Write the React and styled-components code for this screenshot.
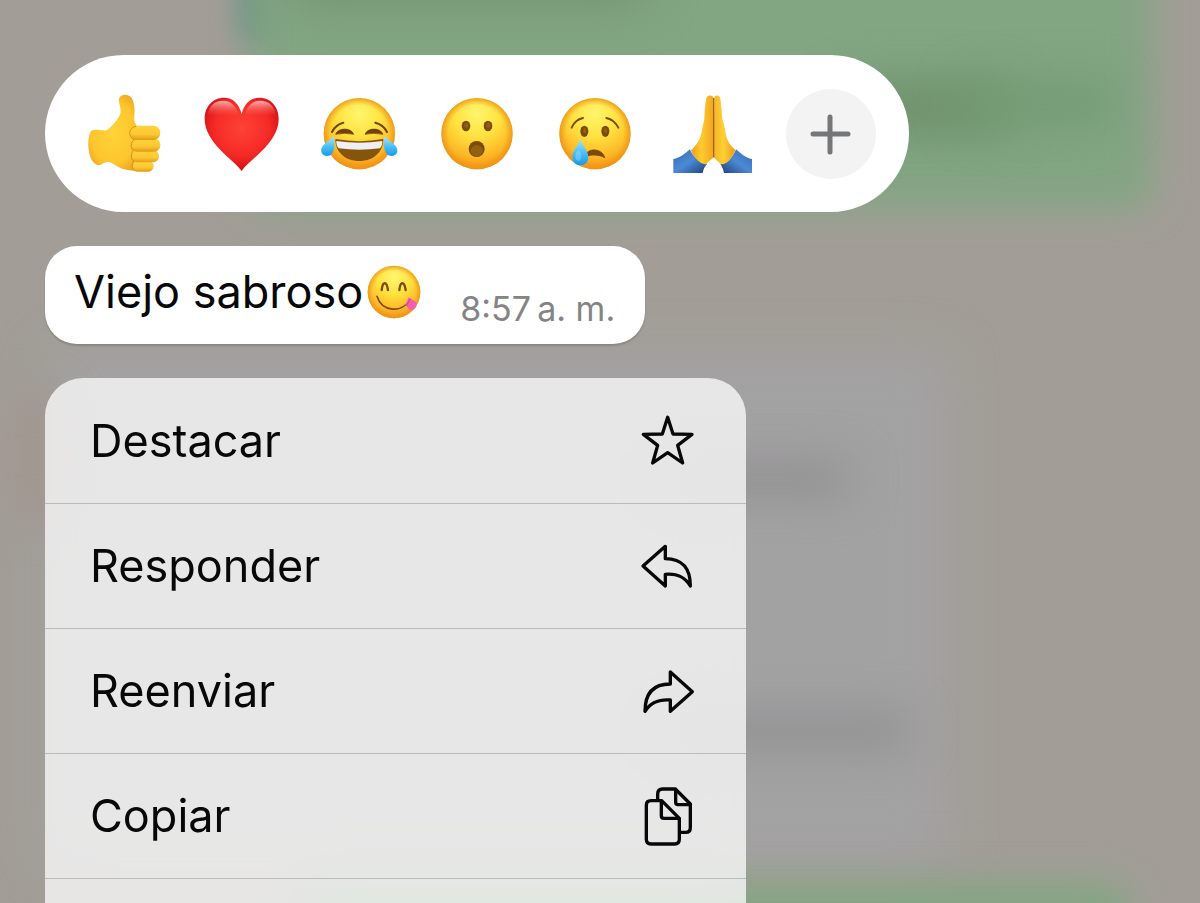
import React from 'react';
import styled, { createGlobalStyle } from "styled-components";

const GlobalStyle = createGlobalStyle`
  * {
    box-sizing: border-box;
  }
  body {
    margin: 0;
    font-family: Inter, "Liberation Sans", sans-serif;
  }
`;

const Page = styled.main`
  position: relative;
  display: flex;
  flex-direction: column;
  align-items: flex-start;
  min-height: 100vh;
  padding: 55px 45px 0;
  overflow: hidden;
  background: #a29e97;
`;

// blurred chat behind the menu
const Backdrop = styled.div`
  position: absolute;
  inset: 0;
  overflow: hidden;
`;

const Blob = styled.div`
  position: absolute;
  left: ${({ $x }) => $x}%;
  top: ${({ $y }) => $y}%;
  width: ${({ $w }) => $w}%;
  height: ${({ $h }) => $h}%;
  border-radius: 20px;
  background: ${({ $color }) => $color};
  filter: blur(${({ $blur }) => $blur || 18}px);
`;

const Reactions = styled.div`
  position: relative;
  display: flex;
  align-items: center;
  gap: 28px;
  max-width: 100%;
  padding: 34px 33px 33px;
  border-radius: 80px;
  background: #ffffff;
`;

const ReactionButton = styled.button`
  display: flex;
  width: 90px;
  height: 90px;
  padding: 0;
  border: none;
  border-radius: 50%;
  background: ${({ $filled }) => ($filled ? "#f3f3f3" : "transparent")};
  cursor: pointer;
  svg {
    width: 100%;
    height: 100%;
  }
`;

const Bubble = styled.div`
  position: relative;
  display: flex;
  align-items: flex-start;
  gap: 39px;
  margin-top: 34px;
  padding: 18px 30px 14px 29px;
  border-radius: 32px;
  background: #ffffff;
  box-shadow: 0 2px 2px rgba(0, 0, 0, 0.16);
`;

const Message = styled.p`
  display: flex;
  align-items: center;
  gap: 4px;
  margin: 0;
  font-size: 45px;
  line-height: 56px;
  color: #080808;
  white-space: nowrap;
  svg {
    width: 54px;
    height: 54px;
  }
`;

const Time = styled.time`
  margin-top: 24px;
  font-size: 34px;
  line-height: 42px;
  color: #848484;
  white-space: nowrap;
`;

const Menu = styled.div`
  position: relative;
  flex: 1;
  width: 100%;
  max-width: 701px;
  margin-top: 34px;
  padding-top: 1px;
  border-radius: 38px 38px 0 0;
  overflow: hidden;
  background: rgba(255, 255, 255, 0.74);
  backdrop-filter: blur(30px);
`;

const MenuItem = styled.button`
  display: flex;
  align-items: center;
  justify-content: space-between;
  width: 100%;
  padding: 32px 48px 32px 45px;
  border: none;
  border-bottom: 1px solid #b9bab9;
  background: transparent;
  font-family: inherit;
  font-size: 45px;
  line-height: 60px;
  color: #080808;
  text-align: left;
  cursor: pointer;
`;

const Icon = styled.svg`
  width: 60px;
  height: 60px;
  fill: none;
  stroke: #080808;
  stroke-width: 10;
  stroke-linecap: round;
  stroke-linejoin: round;
`;

const Gradients = () => (
  <svg width="0" height="0" style={{ position: "absolute" }} aria-hidden="true">
    <defs>
      <radialGradient id="face" cx="50%" cy="22%" r="80%">
        <stop offset="0" stopColor="#fff56e" />
        <stop offset="0.4" stopColor="#ffe23f" />
        <stop offset="0.75" stopColor="#fdb827" />
        <stop offset="1" stopColor="#f48d12" />
      </radialGradient>
      <radialGradient id="rim" cx="50%" cy="50%" r="50%">
        <stop offset="0.8" stopColor="#f09a18" stopOpacity="0" />
        <stop offset="1" stopColor="#ec9418" stopOpacity="0.85" />
      </radialGradient>
      <linearGradient id="tear" x1="0" y1="0" x2="0" y2="1">
        <stop offset="0" stopColor="#a9e6fc" />
        <stop offset="0.5" stopColor="#4fc0f8" />
        <stop offset="1" stopColor="#149bea" />
      </linearGradient>
      <radialGradient id="skin" cx="45%" cy="50%" r="62%">
        <stop offset="0" stopColor="#ffd337" />
        <stop offset="0.65" stopColor="#fdc62e" />
        <stop offset="1" stopColor="#ea9f1c" />
      </radialGradient>
      <linearGradient id="finger" x1="0" y1="0" x2="0" y2="1">
        <stop offset="0" stopColor="#ffd23a" />
        <stop offset="0.6" stopColor="#fdc831" />
        <stop offset="1" stopColor="#e29a1a" />
      </linearGradient>
      <radialGradient id="heart" cx="50%" cy="42%" r="62%">
        <stop offset="0" stopColor="#ff4238" />
        <stop offset="0.6" stopColor="#f52a26" />
        <stop offset="1" stopColor="#c9090f" />
      </radialGradient>
      <linearGradient id="gloss" x1="0" y1="0" x2="0" y2="1">
        <stop offset="0" stopColor="#ffffff" stopOpacity="0.65" />
        <stop offset="0.85" stopColor="#ff7a70" stopOpacity="0" />
      </linearGradient>
      <linearGradient id="sleeve" x1="0" y1="0" x2="1" y2="1">
        <stop offset="0" stopColor="#3567b0" />
        <stop offset="0.5" stopColor="#4c8ad6" />
        <stop offset="1" stopColor="#1f3f78" />
      </linearGradient>
      <linearGradient id="sleeveRight" x1="1" y1="0" x2="0" y2="1">
        <stop offset="0" stopColor="#3567b0" />
        <stop offset="0.5" stopColor="#4c8ad6" />
        <stop offset="1" stopColor="#1f3f78" />
      </linearGradient>
      <linearGradient id="handLeft" x1="0" y1="0" x2="1" y2="0">
        <stop offset="0" stopColor="#eb9f1b" />
        <stop offset="0.45" stopColor="#ffcb30" />
        <stop offset="1" stopColor="#f0a51f" />
      </linearGradient>
      <linearGradient id="handRight" x1="0" y1="0" x2="1" y2="0">
        <stop offset="0" stopColor="#f6b427" />
        <stop offset="0.45" stopColor="#ffcf35" />
        <stop offset="1" stopColor="#eb9f1b" />
      </linearGradient>
    </defs>
  </svg>
);

const Face = ({ cx, cy, r }) => (
  <>
    <circle cx={cx} cy={cy} r={r} fill="url(#face)" />
    <circle cx={cx} cy={cy} r={r} fill="url(#rim)" />
  </>
);

const ThumbsUp = () => (
  <svg viewBox="24 27 270 270">
    <path
      d="M64 152 C76 146 94 153 110 151 C126 139 143 120 151 102 C156 84 142 66 148 54 C154 42 174 41 184 53 C194 66 195 92 193 108 C191 124 196 134 206 141 L222 262 C212 276 182 273 162 268 C142 262 132 250 116 246 C102 244 94 258 82 255 C66 250 56 226 55 198 C54 180 57 160 64 152 Z"
      fill="url(#skin)"
    />
    <rect x="186" y="242" width="65" height="33" rx="16" fill="url(#finger)" />
    <rect x="184" y="210" width="83" height="37" rx="18" fill="url(#finger)" />
    <rect x="182" y="175" width="89" height="40" rx="19" fill="url(#finger)" />
    <rect x="179" y="137" width="92" height="43" rx="21" fill="url(#finger)" />
    <path
      d="M198 139 C184 142 177 152 180 164 C183 174 188 178 194 179 C182 184 180 204 190 212 C182 220 182 238 192 245 C184 254 186 265 194 272"
      fill="none"
      stroke="#c98516"
      strokeWidth="3"
      strokeOpacity="0.8"
    />
  </svg>
);

const Heart = () => (
  <svg viewBox="378 27 270 270">
    <path
      d="M515 273 C494 240 404 190 404 116 C404 78 430 53 462 53 C488 53 507 70 515 102 C523 70 542 53 568 53 C600 53 626 78 626 116 C626 190 536 240 515 273 Z"
      fill="url(#heart)"
    />
    <path d="M412 116 C412 78 434 62 460 62 C484 62 500 78 510 116 Z" fill="url(#gloss)" />
    <path d="M618 116 C618 78 596 62 570 62 C546 62 530 78 520 116 Z" fill="url(#gloss)" />
  </svg>
);

const Joy = () => (
  <svg viewBox="42 27 270 270">
    <Face cx={178} cy={161} r={107} />
    <g fill="none" stroke="#70420c" strokeLinecap="round">
      <path d="M96 156 Q106 134 130 128" strokeWidth="6" />
      <path d="M261 156 Q251 134 226 128" strokeWidth="6" />
    </g>
    <path d="M107 163 C114 142 154 142 161 163 Q135 157 107 163 Z" fill="#70420c" stroke="#70420c" strokeWidth="2" />
    <path d="M195 163 C202 142 242 142 249 163 Q221 157 195 163 Z" fill="#70420c" stroke="#70420c" strokeWidth="2" />
    <path d="M106 177 Q178 190 250 177 C250 218 219 243 178 243 C137 243 106 218 106 177 Z" fill="#85550c" />
    <path d="M109 183 Q178 194 247 183 Q248 197 240 205 Q178 213 116 205 Q108 197 109 183 Z" fill="#f0f0f4" />
    <path d="M101 169 C105 188 105 211 95 222 C86 232 68 229 64 216 C60 196 84 187 101 169 Z" fill="url(#tear)" />
    <path d="M253 169 C250 188 251 211 261 222 C270 232 288 229 292 216 C296 196 270 187 253 169 Z" fill="url(#tear)" />
  </svg>
);

const Wow = () => (
  <svg viewBox="396 27 270 270">
    <Face cx={531} cy={161} r={107} />
    <g fill="#7c4a0b">
      <ellipse cx="498" cy="138" rx="13" ry="16" />
      <ellipse cx="564" cy="138" rx="13" ry="16" />
      <ellipse cx="530" cy="207" rx="24" ry="24" />
    </g>
    <ellipse cx="530" cy="212" rx="18" ry="17" fill="#93600f" />
    <ellipse cx="499" cy="136" rx="6" ry="8" fill="#93600f" />
    <ellipse cx="565" cy="136" rx="6" ry="8" fill="#93600f" />
  </svg>
);

const Cry = () => (
  <svg viewBox="30 27 270 270">
    <Face cx={165} cy={161} r={107} />
    <g fill="none" stroke="#7a4a0c" strokeLinecap="round">
      <path d="M95 143 Q105 119 129 114" strokeWidth="6" />
      <path d="M199 114 Q223 119 235 143" strokeWidth="6" />
    </g>
    <ellipse cx="133" cy="154" rx="12" ry="17" fill="#7c4a0b" />
    <ellipse cx="196" cy="154" rx="12" ry="17" fill="#7c4a0b" />
    <ellipse cx="134" cy="152" rx="5" ry="8" fill="#93600f" />
    <ellipse cx="197" cy="152" rx="5" ry="8" fill="#93600f" />
    <path d="M136 229 C140 203 186 203 194 233 C180 224 158 222 136 229 Z" fill="#7c4a0b" stroke="#7c4a0b" strokeWidth="3" />
    <path d="M121 176 C126 196 145 210 145 232 C145 248 135 256 121 256 C107 256 97 246 97 231 C97 210 116 196 121 176 Z" fill="url(#tear)" />
    <ellipse cx="115" cy="228" rx="9" ry="15" fill="#b4e8fc" fillOpacity="0.35" />
  </svg>
);

const Pray = () => (
  <svg viewBox="384 27 270 270">
    <path d="M400 237 C420 234 436 220 450 208 C456 226 474 244 501 252 C494 260 490 268 488 279 L400 279 Z" fill="url(#sleeve)" />
    <path d="M636 237 C616 234 602 220 588 208 C582 226 564 244 541 252 C546 260 550 268 552 279 L636 279 Z" fill="url(#sleeveRight)" />
    <path d="M500 52 C504 44 520 44 520 54 L521 232 C514 240 506 243 500 251 C490 259 462 238 453 211 C470 195 480 180 485 156 C486 140 492 130 493 116 C494 92 496 64 500 52 Z" fill="url(#handLeft)" />
    <path d="M540 52 C536 44 523 44 523 54 L521 232 C528 240 534 243 540 251 C552 259 578 238 586 209 C568 195 560 180 556 156 C556 140 549 130 547 116 C545 92 543 64 540 52 Z" fill="url(#handRight)" />
    <path d="M521 54 V232" stroke="#a8650c" strokeWidth="4" />
  </svg>
);

const Plus = () => (
  <svg viewBox="0 0 90 90" stroke="#757678" strokeWidth="5" strokeLinecap="round">
    <path d="M27 45 H62 M44 28 V63" />
  </svg>
);

const Yum = () => (
  <svg viewBox="981 72 162 162" role="img" aria-label="cara saboreando">
    <Face cx={1062} cy={153} r={79} />
    <g fill="none" stroke="#7a4a0c" strokeLinecap="round">
      <path d="M1025 147 C1028 120 1040 120 1044 147" strokeWidth="7" />
      <path d="M1078 147 C1081 120 1093 120 1097 147" strokeWidth="7" />
      <path d="M1011 166 C1026 214 1086 216 1108 178" strokeWidth="5" />
    </g>
    <path d="M1106 169 L1129 184 C1134 194 1122 211 1110 207 L1096 192 Z" fill="#f25fae" />
    <path d="M1110 174 L1100 193" stroke="#cf3d8b" strokeWidth="3" />
  </svg>
);

const StarIcon = () => (
  <Icon viewBox="54 120 180 180">
    <path d="M143 139 L159 189 L216 190 L173 223 L188 276 L143 245 L98 276 L113 223 L70 190 L127 189 Z" />
  </Icon>
);

const ReplyIcon = () => (
  <Icon viewBox="54 498 180 180">
    <path d="M136 529 L69 588 L136 648 V613 C172 610 194 620 211 648 C211 594 188 567 136 566 Z" />
  </Icon>
);

const ForwardIcon = () => (
  <Icon viewBox="54 63 180 180">
    <path d="M151 96 L217 155 L151 214 V180 C116 178 92 186 75 214 C75 160 100 132 151 132 Z" />
  </Icon>
);

const CopyIcon = () => (
  <Icon viewBox="54 438 180 180">
    <path d="M113 480 V462 Q113 447 128 447 H166 L211 492 V563 Q211 577 197 577 H184" />
    <path d="M167 448 V487 Q167 494 174 494 H210" />
    <path d="M93 482 H125 L178 535 V598 Q178 612 164 612 H93 Q79 612 79 598 V496 Q79 482 93 482 Z" />
    <path d="M124 483 V527 Q124 535 132 535 H177" />
  </Icon>
);

const reactions = [
  { name: "Me gusta", Emoji: ThumbsUp },
  { name: "Me encanta", Emoji: Heart },
  { name: "Me divierte", Emoji: Joy },
  { name: "Me asombra", Emoji: Wow },
  { name: "Me entristece", Emoji: Cry },
  { name: "Gracias", Emoji: Pray },
];

const actions = [
  { label: "Destacar", ActionIcon: StarIcon },
  { label: "Responder", ActionIcon: ReplyIcon },
  { label: "Reenviar", ActionIcon: ForwardIcon },
  { label: "Copiar", ActionIcon: CopyIcon },
];

const blobs = [
  { x: 4, y: 39, w: 75, h: 57, color: "#a3a2a3", blur: 24 },
  { x: 20, y: -8, w: 10, h: 13, color: "#6c918b", blur: 14 },
  { x: 21, y: -8, w: 75, h: 31, color: "#82a582" },
  { x: 24, y: -7, w: 30, h: 7, color: "#72926f", blur: 24 },
  { x: 70, y: 9, w: 14, h: 6, color: "#6f926c", blur: 22 },
  { x: 80, y: 9, w: 13, h: 5, color: "#739b74", blur: 22 },
  { x: 54, y: 51, w: 17, h: 4, color: "#919091", blur: 22 },
  { x: 54, y: 79, w: 22, h: 4, color: "#909091", blur: 22 },
  { x: 1, y: 43, w: 4, h: 15, color: "#a1968f", blur: 20 },
  { x: 25, y: 98, w: 69, h: 12, color: "#82a582" },
];

const App = () => {
  return (
    <>
      <GlobalStyle />
      <Gradients />
      <Page>
        <Backdrop aria-hidden="true">
          {blobs.map((blob, i) => (
            <Blob
              key={i}
              $x={blob.x}
              $y={blob.y}
              $w={blob.w}
              $h={blob.h}
              $color={blob.color}
              $blur={blob.blur}
            />
          ))}
        </Backdrop>

        <Reactions>
          {reactions.map(({ name, Emoji }) => (
            <ReactionButton key={name} aria-label={name}>
              <Emoji />
            </ReactionButton>
          ))}
          <ReactionButton $filled aria-label="Más reacciones">
            <Plus />
          </ReactionButton>
        </Reactions>

        <Bubble>
          <Message>
            Viejo sabroso
            <Yum />
          </Message>
          <Time dateTime="08:57">8:57{"\u202f"}a. m.</Time>
        </Bubble>

        <Menu>
          {actions.map(({ label, ActionIcon }) => (
            <MenuItem key={label}>
              {label}
              <ActionIcon />
            </MenuItem>
          ))}
        </Menu>
      </Page>
    </>
  )
}

export default App
